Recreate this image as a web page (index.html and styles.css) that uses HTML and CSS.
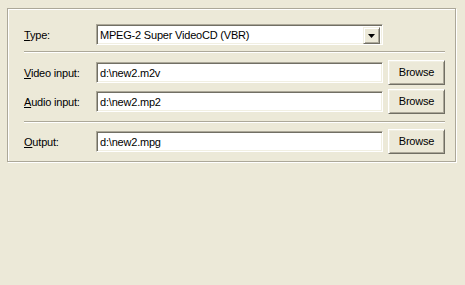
FILE: index.html
```html
<!DOCTYPE html>
<html>
<head>
<meta charset="utf-8">
<link rel="stylesheet" href="styles.css">
</head>
<body>
<div class="panel">
  <div class="row row-type">
    <div class="lbl"><u>T</u>ype:</div>
    <div class="combo">
      <span class="combo-text">MPEG-2 Super VideoCD (VBR)</span>
      <span class="drop"><svg width="7" height="4" viewBox="0 0 7 4"><path d="M0 0H7L3.5 4Z" fill="#000"/></svg></span>
    </div>
  </div>
  <div class="sep sep1"></div>
  <div class="row row-video">
    <div class="lbl"><u>V</u>ideo input:</div>
    <div class="field">d:\new2.m2v</div>
    <div class="btn">Browse</div>
  </div>
  <div class="row row-audio">
    <div class="lbl"><u>A</u>udio input:</div>
    <div class="field">d:\new2.mp2</div>
    <div class="btn">Browse</div>
  </div>
  <div class="sep sep2"></div>
  <div class="row row-output">
    <div class="lbl"><u>O</u>utput:</div>
    <div class="field">d:\new2.mpg</div>
    <div class="btn">Browse</div>
  </div>
</div>
</body>
</html>
```
FILE: styles.css
```css
html, body {
  margin: 0;
  padding: 0;
  background: #ece9d8;
}
body {
  font-family: "Liberation Sans", Arial, sans-serif;
  font-size: 11px;
  letter-spacing: -0.2px;
  color: #000;
  padding: 8px 0 0 7px;
  height: 285px;
  box-sizing: border-box;
}
.panel {
  box-sizing: border-box;
  width: 449px;
  height: 154px;
  border: 1px solid #aca899;
  box-shadow: 1px 1px 0 #fff, inset 1px 1px 0 #fff;
  padding: 15px 0 0 16px;
}
.row {
  display: grid;
  grid-template-columns: 67px 287px 57px;
  column-gap: 5px;
  align-items: start;
}
.row-type {
  height: 21px;
}
.row-video, .row-audio, .row-output {
  height: 25px;
}
.row-audio {
  margin-top: 4px;
}
.lbl {
  line-height: 21px;
  padding-top: 1px;
  height: 20px;
  white-space: nowrap;
}
.row-video .lbl, .row-audio .lbl, .row-output .lbl,
.row-video .field, .row-audio .field, .row-output .field {
  margin-top: 2px;
}
.sep {
  width: 421px;
  height: 1px;
  background: #aca899;
  border-bottom: 1px solid #fff;
}
.sep1 {
  margin: 6px 0 7px 0;
}
.sep2 {
  margin: 7px 0 6px 0;
}
.field, .combo {
  box-sizing: border-box;
  height: 21px;
  background: #fff;
  border: 1px solid;
  border-color: #aca899 #fff #fff #aca899;
  box-shadow: inset 1px 1px 0 #716f64, inset -1px -1px 0 #f1efe2;
  padding: 1px 0 0 3px;
  line-height: 19px;
  white-space: nowrap;
  overflow: hidden;
}
.combo {
  display: flex;
  justify-content: space-between;
  align-items: flex-start;
  padding: 1px 2px 0 3px;
}
.combo-text {
  line-height: 19px;
}
.drop {
  box-sizing: border-box;
  width: 17px;
  height: 17px;
  margin-top: 1px;
  background: #ece9d8;
  border: 1px solid;
  border-color: #f1efe2 #716f64 #716f64 #f1efe2;
  box-shadow: inset 1px 1px 0 #fff, inset -1px -1px 0 #aca899;
  display: flex;
  align-items: center;
  justify-content: center;
}
.drop svg {
  display: block;
  margin-top: 1px;
}
.btn {
  box-sizing: border-box;
  height: 25px;
  background: #ece9d8;
  border: 1px solid;
  border-color: #fff #716f64 #716f64 #fff;
  box-shadow: inset 1px 1px 0 #f1efe2, inset -1px -1px 0 #aca899;
  text-align: center;
  line-height: 23px;
}
```
